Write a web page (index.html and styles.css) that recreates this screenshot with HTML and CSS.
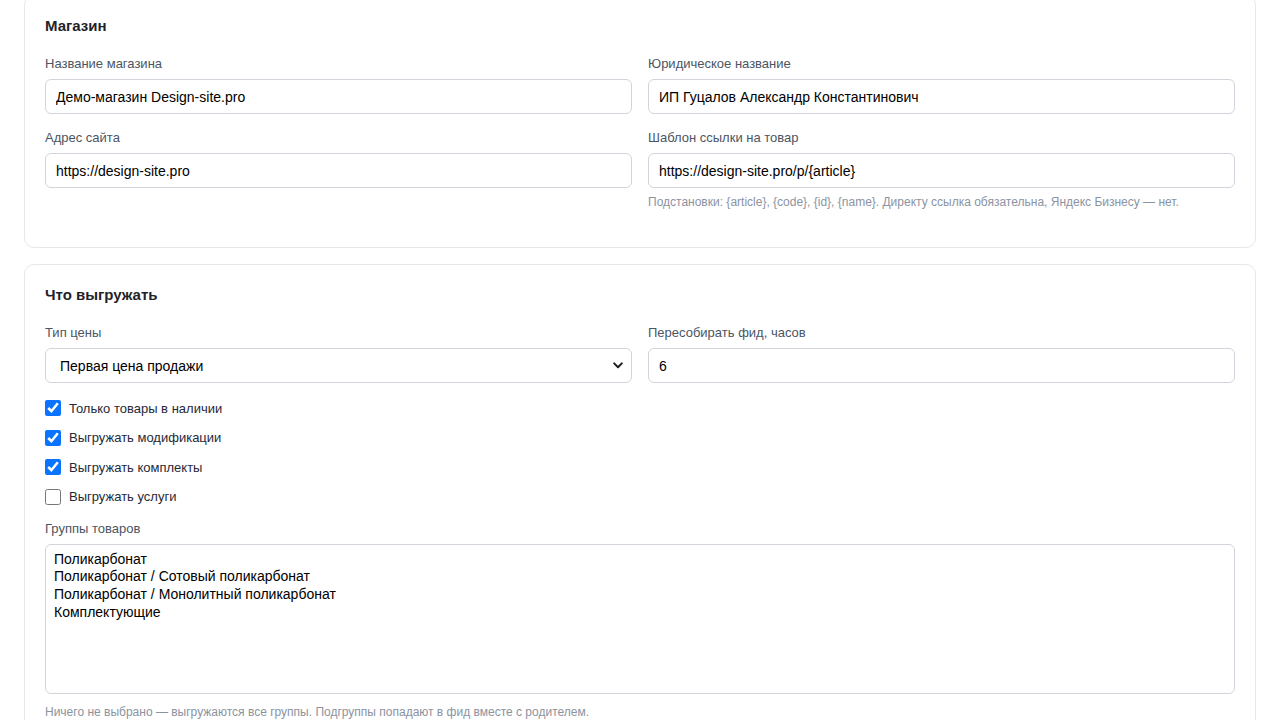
FILE: index.html
```html
<!DOCTYPE html>
<html lang="ru">
<head>
    <meta charset="UTF-8">
    <meta name="viewport" content="width=device-width, initial-scale=1.0">
    <title>Настройки фида</title>
    <link rel="stylesheet" href="styles.css">
</head>
<body>
    <div class="page">
        <!-- Магазин -->
        <section class="card">
            <h2>Магазин</h2>
            <div class="grid">
                <div class="field">
                    <label>Название магазина</label>
                    <input type="text" value="Демо-магазин Design-site.pro">
                </div>
                <div class="field">
                    <label>Юридическое название</label>
                    <input type="text" value="ИП Гуцалов Александр Константинович">
                </div>
                <div class="field">
                    <label>Адрес сайта</label>
                    <input type="text" value="https://design-site.pro">
                </div>
                <div class="field">
                    <label>Шаблон ссылки на товар</label>
                    <input type="text" value="https://design-site.pro/p/{article}">
                    <div class="hint">Подстановки: {article}, {code}, {id}, {name}. Директу ссылка обязательна, Яндекс Бизнесу — нет.</div>
                </div>
            </div>
        </section>

        <!-- Что выгружать -->
        <section class="card">
            <h2>Что выгружать</h2>
            <div class="grid">
                <div class="field">
                    <label>Тип цены</label>
                    <div class="select-wrap">
                        <select>
                            <option selected>Первая цена продажи</option>
                            <option>Вторая цена продажи</option>
                            <option>Закупочная цена</option>
                        </select>
                        <svg class="chevron" width="10" height="7" viewBox="0 0 10 7">
                            <path d="M1.2 1.4 L5 5.2 L8.8 1.4" fill="none" stroke="#1f1f1f" stroke-width="2" stroke-linecap="round" stroke-linejoin="round"/>
                        </svg>
                    </div>
                </div>
                <div class="field">
                    <label>Пересобирать фид, часов</label>
                    <input type="number" value="6">
                </div>
            </div>

            <div class="checks">
                <label class="check"><input type="checkbox" checked> Только товары в наличии</label>
                <label class="check"><input type="checkbox" checked> Выгружать модификации</label>
                <label class="check"><input type="checkbox" checked> Выгружать комплекты</label>
                <label class="check"><input type="checkbox"> Выгружать услуги</label>
            </div>

            <div class="field">
                <label>Группы товаров</label>
                <select class="groups" multiple>
                    <option>Поликарбонат</option>
                    <option>Поликарбонат / Сотовый поликарбонат</option>
                    <option>Поликарбонат / Монолитный поликарбонат</option>
                    <option>Комплектующие</option>
                </select>
                <div class="hint">Ничего не выбрано — выгружаются все группы. Подгруппы попадают в фид вместе с родителем.</div>
            </div>
        </section>
    </div>
</body>
</html>
```

FILE: styles.css
```css
/* общие стили */
body {
    margin: 0;
    background: #fff;
    font-family: 'Liberation Sans', Arial, sans-serif;
    color: #1f2937;
}

.page {
    padding: 0 24px;
    margin-top: -5px;
}

/* карточка раздела */
.card {
    background: #fff;
    border: 1px solid #e5e7eb;
    border-radius: 10px;
    padding: 20px 20px 22px;
    margin-bottom: 16px;
}

.card h2 {
    margin: 0 0 19px;
    font-size: 15px;
    line-height: 20px;
    font-weight: bold;
    color: #1f2329;
}

.grid {
    display: grid;
    grid-template-columns: 1fr 1fr;
    column-gap: 16px;
    align-items: start;
}

.field {
    margin-bottom: 15px;
}

.field > label {
    display: block;
    font-size: 13px;
    line-height: 18px;
    color: #4b5563;
    margin-bottom: 6px;
}

input[type="text"],
input[type="number"],
select {
    box-sizing: border-box;
    width: 100%;
    height: 35px;
    padding: 0 10px;
    border: 1px solid #d1d5db;
    border-radius: 6px;
    font-family: inherit;
    font-size: 14px;
    color: #000;
    background: #fff;
    outline: none;
}

input[type="number"] {
    -moz-appearance: textfield;
}

input[type="number"]::-webkit-inner-spin-button,
input[type="number"]::-webkit-outer-spin-button {
    -webkit-appearance: none;
    margin: 0;
}

/* выпадающий список */
.select-wrap {
    position: relative;
}

.select-wrap select {
    appearance: none;
    -webkit-appearance: none;
    padding-left: 14px;
}

.chevron {
    position: absolute;
    right: 9px;
    top: 14px;
    pointer-events: none;
}

.groups {
    height: 150px;
    padding: 6px;
    margin-bottom: 3px;
    overflow: auto;
}

.groups option {
    padding: 0 2px 1px;
    line-height: 16px;
    color: #000;
}

.hint {
    margin-top: 6px;
    font-size: 12px;
    line-height: 16px;
    color: #8b939f;
}

/* галочки */
.checks {
    margin-bottom: 13px;
}

.check {
    display: flex;
    align-items: center;
    gap: 8px;
    height: 20px;
    margin-bottom: 9.5px;
    font-size: 13px;
    color: #1f2937;
}

.check input {
    width: 16px;
    height: 16px;
    margin: 0;
    accent-color: #0a73ff;
}
```
